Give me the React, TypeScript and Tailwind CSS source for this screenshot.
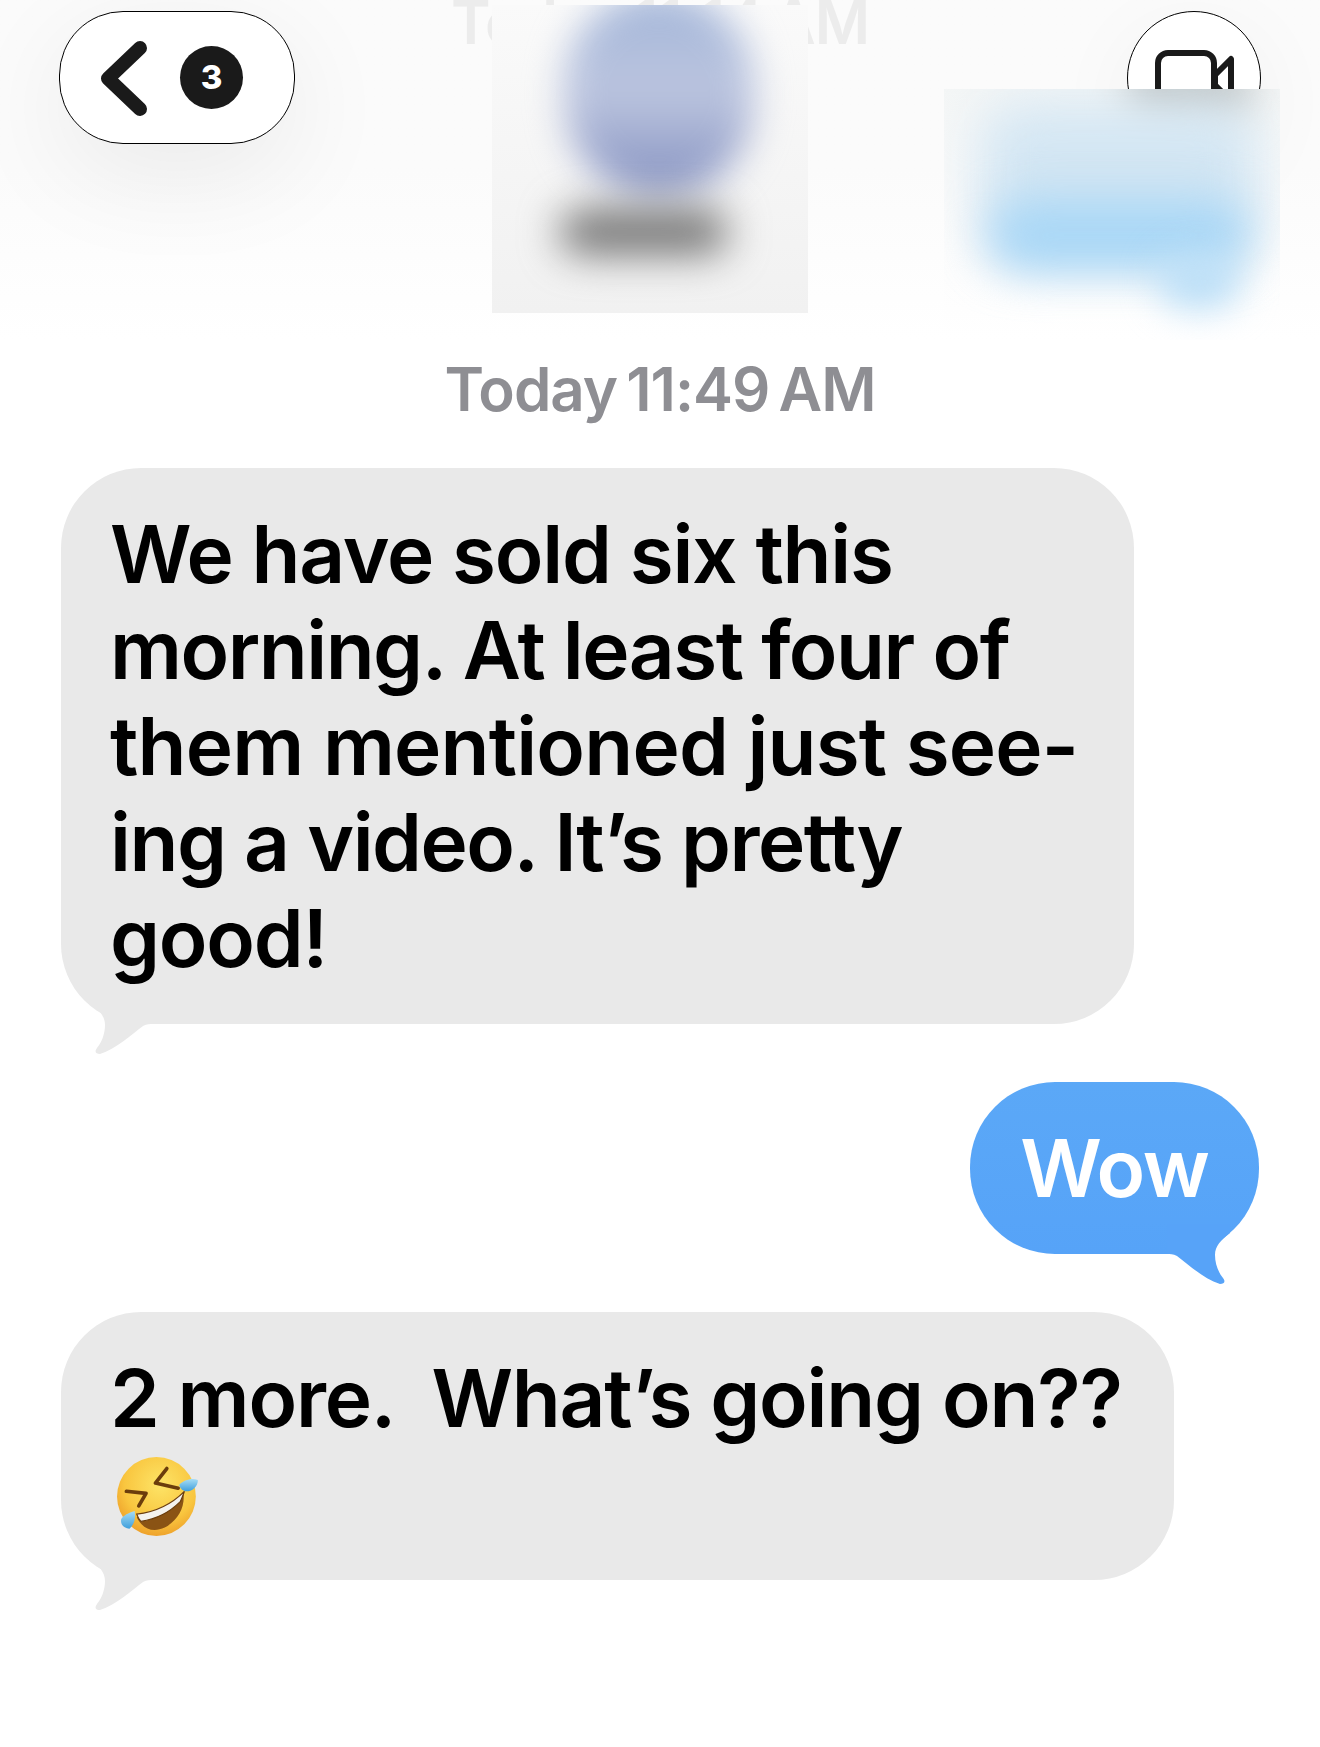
const sans = "font-['Inter','Liberation_Sans',sans-serif]";

function Tail({ className, fill }: { className: string; fill: string }) {
  return (
    <svg className={className} width="72" height="60" viewBox="0 0 72 60" aria-hidden="true">
      <path
        d="M9 9C18 16 24 22 24 31C24 41 20 49 16 54C13 58 15 60 19 60C35 55 50 41 62 32C66 30 69 30 72 30L72 0L9 0Z"
        fill={fill}
      />
    </svg>
  );
}

function RoflEmoji() {
  return (
    <svg className="block ml-[6px]" width="85" height="83" viewBox="0 0 82 80" aria-hidden="true">
      <defs>
        <radialGradient id="face" cx="0.55" cy="0.35" r="0.7">
          <stop offset="0" stopColor="#fde467" />
          <stop offset="0.65" stopColor="#f9c63f" />
          <stop offset="1" stopColor="#ec9a27" />
        </radialGradient>
        <linearGradient id="tear" x1="0" y1="0" x2="0" y2="1">
          <stop offset="0" stopColor="#a5dcf5" />
          <stop offset="1" stopColor="#3f9fdc" />
        </linearGradient>
      </defs>
      <circle cx="39" cy="40" r="38" fill="url(#face)" />
      <path d="M65 36C67 50 60 63 47 70C36 75 26 72 20 60C36 58 54 50 65 36Z" fill="#8a5314" />
      <path d="M66 35C65 38 64 41 62 45C52 55 38 62 24 64C22 62 21 60 20 57C38 55 54 47 66 35Z" fill="#f4f2ee" stroke="#6b3d0c" strokeWidth="1.2" />
      <path d="M49 13L38 27L60 32" fill="none" stroke="#6b3d0c" strokeWidth="3.5" strokeLinecap="round" strokeLinejoin="round" />
      <path d="M10 35L29 37L22 49" fill="none" stroke="#6b3d0c" strokeWidth="3.5" strokeLinecap="round" strokeLinejoin="round" />
      <path d="M61 29C65 24 73 22 79 24C79 30 74 35 68 35C65 35 62 33 61 29Z" fill="url(#tear)" />
      <path d="M18 54C19 60 18 67 13 71C8 71 4 67 5 62C7 58 12 56 18 54Z" fill="url(#tear)" />
    </svg>
  );
}

export default function App() {
  return (
    <div className={`${sans} w-[1320px] h-[1747px] bg-white overflow-hidden`}>
      {/* blurred header */}
      <div className="relative h-[340px] bg-gradient-to-b from-[#fbfbfb] via-[#fbfbfb] to-white overflow-hidden">
        <div className="absolute left-0 right-0 top-[-10px] text-center text-[60px] leading-[64px] font-semibold tracking-[-1px] [word-spacing:-5px] text-[#ececec] whitespace-nowrap">
          Today 11:14 AM
        </div>

        <div className="relative flex justify-between pl-[59px] pr-[59px] pt-[11px]">
          <div className="flex items-center w-[236px] h-[133px] rounded-[64px] border border-black bg-white pl-[36px] gap-[30px] shadow-[0_30px_110px_rgba(0,0,0,0.07)]">
            <svg width="54" height="78" viewBox="0 0 54 78" aria-hidden="true">
              <path d="M44 9L12 39.5L44 70" fill="none" stroke="#1a1a1a" strokeWidth="14" strokeLinecap="round" strokeLinejoin="round" />
            </svg>
            <div className="flex items-center justify-center w-[63px] h-[63px] rounded-full bg-[#1a1a1a] text-white text-[33px] font-extrabold">
              3
            </div>
          </div>
          <div className="flex items-start justify-center w-[134px] h-[134px] rounded-full border border-black bg-white pt-[38px] pl-[3px] shadow-[0_24px_90px_rgba(0,0,0,0.05)]">
            <svg width="82" height="60" viewBox="0 0 82 60" aria-hidden="true">
              <rect x="3" y="3" width="56" height="54" rx="10" fill="none" stroke="#1a1a1a" strokeWidth="6" />
              <path d="M76 9V51L60 35V25Z" fill="none" stroke="#1a1a1a" strokeWidth="6" strokeLinejoin="round" />
            </svg>
          </div>
        </div>

        <div className="absolute left-[492px] top-[5px] w-[316px] h-[308px] overflow-hidden bg-gradient-to-b from-[#fafafa] to-[#f1f1f1]">
          <div className="absolute left-[72px] top-[-14px] w-[190px] h-[205px] rounded-full blur-[18px] bg-gradient-to-b from-[#a3b6d9] via-[#bcc5df] to-[#8490bf]" />
          <div className="absolute left-[68px] top-[205px] w-[168px] h-[44px] rounded-full blur-[20px] bg-[#707070]" />
        </div>

        <div className="absolute left-[944px] top-[89px] w-[336px] h-[251px] overflow-hidden bg-gradient-to-b from-[#f4f6f6] via-[#fbfbfb] to-white">
          <div className="absolute left-[180px] top-[-30px] w-[130px] h-[60px] rounded-full blur-[18px] bg-[#c2c6c6]" />
          <div className="absolute left-[35px] top-[15px] w-[280px] h-[155px] rounded-[40px] blur-[26px] bg-[#d3e6f3]" />
          <div className="absolute left-[45px] top-[110px] w-[260px] h-[72px] rounded-[36px] blur-[22px] bg-[#a9d7f6]" />
          <div className="absolute left-[215px] top-[165px] w-[80px] h-[55px] rounded-full blur-[18px] bg-[#bcdff7]" />
        </div>
      </div>

      <div className="pt-[16px] text-center text-[60px] leading-[66px] font-semibold tracking-[-1px] [word-spacing:-5px] text-[#8e8e93]">
        Today 11:49 AM
      </div>

      <div className="flex flex-col items-start gap-[58px] px-[61px] pt-[46px] text-[80px] leading-[96px] font-semibold tracking-[-1.2px]">
        <div className="relative w-[1073px] rounded-[80px] bg-[#e9e9e9] py-[38px] pl-[49px] text-black whitespace-nowrap">
          <div>We have sold six this</div>
          <div className="tracking-[-1.5px]">morning. At least four of</div>
          <div className="tracking-[-0.8px]">them mentioned just see-</div>
          <div className="tracking-[-1.5px]">ing a video. It’s pretty</div>
          <div>good!</div>
          <Tail className="absolute left-[20px] bottom-[-30px]" fill="#e9e9e9" />
        </div>

        <div className="relative self-end w-[289px] rounded-[85px] bg-gradient-to-b from-[#5ba8f7] to-[#56a3f8] py-[38px] text-center text-white">
          Wow
          <Tail className="absolute right-[20px] bottom-[-30px] -scale-x-100" fill="#57a3f8" />
        </div>

        <div className="relative w-[1113px] rounded-[80px] bg-[#e9e9e9] py-[38px] pl-[49px] text-black whitespace-pre">
          <div>2 more.  What’s going on??</div>
          <div className="h-[96px] pt-[9px]">
            <RoflEmoji />
          </div>
          <Tail className="absolute left-[20px] bottom-[-30px]" fill="#e9e9e9" />
        </div>
      </div>
    </div>
  );
}
